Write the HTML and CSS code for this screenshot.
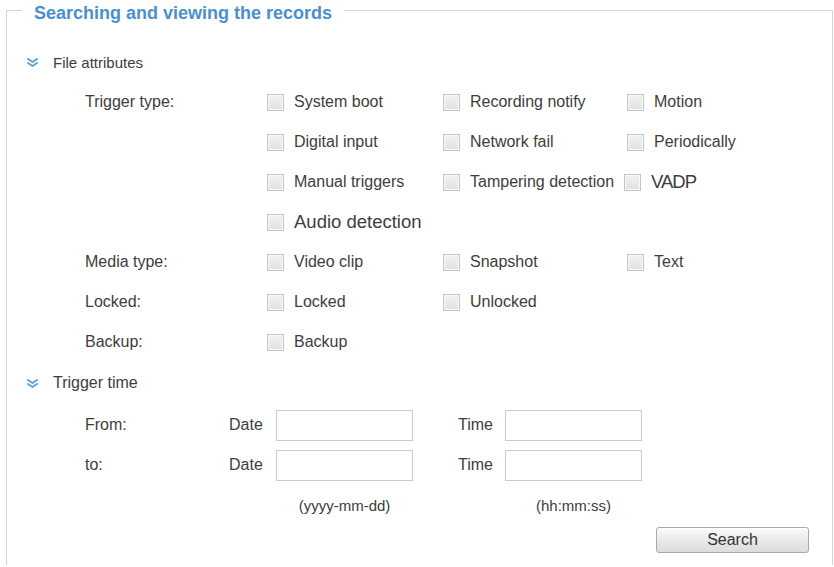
FILE: index.html
```html
<!DOCTYPE html>
<html lang="en">
<head>
<meta charset="utf-8">
<title>Searching and viewing the records</title>
<link rel="stylesheet" href="styles.css">
</head>
<body>
<fieldset class="panel">
  <legend class="panel-title">Searching and viewing the records</legend>

  <div class="section-head section-head--first">
    <svg class="chevron" width="11" height="9" viewBox="0 0 11 9" aria-hidden="true">
      <polyline points="1,1 5.5,4 10,1"/>
      <polyline points="1,5 5.5,8 10,5"/>
    </svg>
    <span class="section-name section-name--sm">File attributes</span>
  </div>

  <div class="row">
    <span class="row-label">Trigger type:</span>
    <label class="opt"><input type="checkbox" class="box"><span>System boot</span></label>
    <label class="opt"><input type="checkbox" class="box"><span>Recording notify</span></label>
    <label class="opt"><input type="checkbox" class="box"><span>Motion</span></label>
  </div>
  <div class="row">
    <span class="row-label"></span>
    <label class="opt"><input type="checkbox" class="box"><span>Digital input</span></label>
    <label class="opt"><input type="checkbox" class="box"><span>Network fail</span></label>
    <label class="opt"><input type="checkbox" class="box"><span>Periodically</span></label>
  </div>
  <div class="row">
    <span class="row-label"></span>
    <label class="opt"><input type="checkbox" class="box"><span>Manual triggers</span></label>
    <label class="opt"><input type="checkbox" class="box"><span>Tampering detection</span></label>
    <label class="opt opt--tight"><input type="checkbox" class="box"><span class="big big--vadp">VADP</span></label>
  </div>
  <div class="row">
    <span class="row-label"></span>
    <label class="opt"><input type="checkbox" class="box"><span class="big">Audio detection</span></label>
  </div>
  <div class="row">
    <span class="row-label">Media type:</span>
    <label class="opt"><input type="checkbox" class="box"><span>Video clip</span></label>
    <label class="opt"><input type="checkbox" class="box"><span>Snapshot</span></label>
    <label class="opt"><input type="checkbox" class="box"><span>Text</span></label>
  </div>
  <div class="row">
    <span class="row-label">Locked:</span>
    <label class="opt"><input type="checkbox" class="box"><span>Locked</span></label>
    <label class="opt"><input type="checkbox" class="box"><span>Unlocked</span></label>
  </div>
  <div class="row">
    <span class="row-label">Backup:</span>
    <label class="opt"><input type="checkbox" class="box"><span>Backup</span></label>
  </div>

  <div class="section-head section-head--time">
    <svg class="chevron" width="11" height="9" viewBox="0 0 11 9" aria-hidden="true">
      <polyline points="1,1 5.5,4 10,1"/>
      <polyline points="1,5 5.5,8 10,5"/>
    </svg>
    <span class="section-name">Trigger time</span>
  </div>

  <div class="time-row time-row--first">
    <span class="row-label">From:</span>
    <span class="field-label">Date</span>
    <input type="text" class="field">
    <span></span>
    <span class="field-label">Time</span>
    <input type="text" class="field">
  </div>
  <div class="time-row">
    <span class="row-label">to:</span>
    <span class="field-label">Date</span>
    <input type="text" class="field">
    <span></span>
    <span class="field-label">Time</span>
    <input type="text" class="field">
  </div>
  <div class="time-row">
    <span></span>
    <span></span>
    <span class="hint">(yyyy-mm-dd)</span>
    <span></span>
    <span></span>
    <span class="hint">(hh:mm:ss)</span>
  </div>

  <div class="actions">
    <button type="button" class="btn">Search</button>
  </div>
</fieldset>
</body>
</html>
```

FILE: styles.css
```css
html, body {
  margin: 0;
  padding: 0;
  background: #ffffff;
  overflow: hidden;
}

body {
  font-family: "Liberation Sans", Arial, sans-serif;
  color: #3d3d3d;
  font-size: 16px;
}

.panel {
  box-sizing: border-box;
  width: 827px;
  margin: -3px 0 0 6px;
  padding: 0 0 12px 0;
  border: 1px solid #d4d4d4;
  border-bottom: none;
  min-width: 0;
}

.panel-title {
  margin-left: 15px;
  padding: 6px 12px 0 12px;
  font-size: 18px;
  line-height: 20px;
  font-weight: bold;
  color: #4a90cf;
}

/* collapsible section headers */
.section-head {
  display: flex;
  align-items: center;
  height: 40px;
  padding-left: 20px;
}

.section-head--first {
  margin-top: 19px;
}

.section-head--time {
  margin-top: 1px;
}

.chevron {
  flex: none;
  margin-right: 15px;
  fill: none;
  stroke: #5aa3dc;
  stroke-width: 2;
  stroke-linecap: round;
  stroke-linejoin: round;
}

.section-name {
  font-size: 16px;
}

.section-name--sm {
  font-size: 15px;
}

/* option rows */
.row {
  display: grid;
  grid-template-columns: 182px 176px 184px auto;
  align-items: center;
  height: 40px;
  padding-left: 78px;
}

.row-label {
  font-size: 16px;
}

.opt {
  display: flex;
  align-items: center;
  white-space: nowrap;
}

.opt--tight {
  margin-left: -3px;
}

.box {
  appearance: none;
  -webkit-appearance: none;
  box-sizing: border-box;
  width: 17px;
  height: 17px;
  margin: 0 10px 0 0;
  border: 1px solid #c4c4c4;
  background: linear-gradient(#f1f1f1, #e2e2e2);
  box-shadow: inset 0 0 0 1px #f8f8f8;
  flex: none;
}

.big {
  font-size: 18.5px;
}

.big--vadp {
  font-size: 18.5px;
  letter-spacing: -1px;
}

/* date / time rows */
.time-row {
  display: grid;
  grid-template-columns: 144px 47px 137px 45px 47px 137px;
  align-items: center;
  height: 40px;
  padding-left: 78px;
}

.time-row--first {
  margin-top: 2px;
}

.field-label {
  font-size: 16px;
}

.field {
  box-sizing: border-box;
  width: 137px;
  height: 31px;
  margin: 0;
  border: 1px solid #cacaca;
  background: #ffffff;
  font: inherit;
}

.hint {
  font-size: 15px;
  text-align: center;
}

.actions {
  display: flex;
  justify-content: flex-end;
  padding-right: 23px;
  padding-top: 2px;
}

.btn {
  box-sizing: border-box;
  width: 153px;
  height: 26px;
  border: 1px solid #a9a9a9;
  border-radius: 3px;
  background: linear-gradient(#fbfbfb, #e6e6e6 60%, #dcdcdc);
  box-shadow: inset 0 1px 0 #ffffff;
  font-family: "Liberation Sans", Arial, sans-serif;
  font-size: 16px;
  color: #333333;
  padding: 0;
}
```
